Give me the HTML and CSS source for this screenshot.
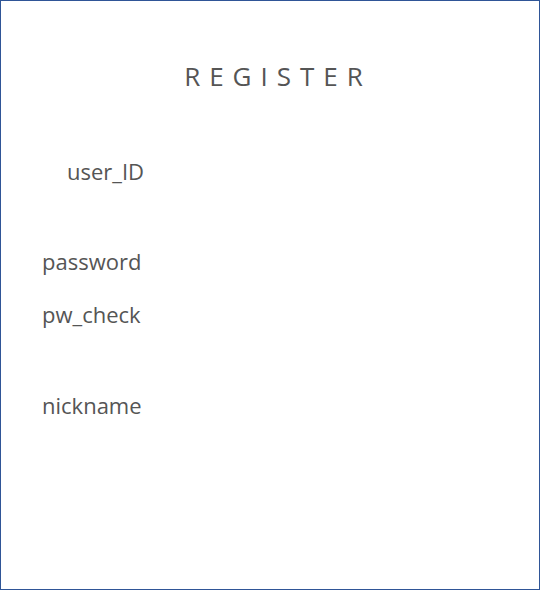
FILE: index.html
```html
<!DOCTYPE html>
<html>
<head>
<meta charset="utf-8">
<link rel="stylesheet" href="styles.css">
</head>
<body>
<div class="frame">
  <h1 class="title">REGISTER</h1>
  <form class="form">
    <div class="label label-id">user_ID</div>
    <div class="label label-pw">password</div>
    <div class="label label-check">pw_check</div>
    <div class="label label-nick">nickname</div>
  </form>
</div>
</body>
</html>
```
FILE: styles.css
```css
html, body {
  margin: 0;
  padding: 0;
  background: #ffffff;
}
.frame {
  box-sizing: border-box;
  width: 540px;
  height: 590px;
  border: 1px solid #2f5597;
  padding-top: 57px;
  font-family: "Open Sans", "Liberation Sans", sans-serif;
  color: #555555;
}
.title {
  margin: 0;
  padding-left: 16px;
  font-size: 26px;
  font-weight: 400;
  line-height: 36px;
  letter-spacing: 9px;
  text-align: center;
}
.form {
  display: flex;
  flex-direction: column;
  padding-left: 41px;
  padding-top: 62px;
}
.label {
  font-size: 22px;
  line-height: 30px;
}
.label-id {
  padding-left: 25px;
}
.label-pw {
  margin-top: 60px;
}
.label-check {
  margin-top: 23px;
}
.label-nick {
  margin-top: 61px;
}
```
